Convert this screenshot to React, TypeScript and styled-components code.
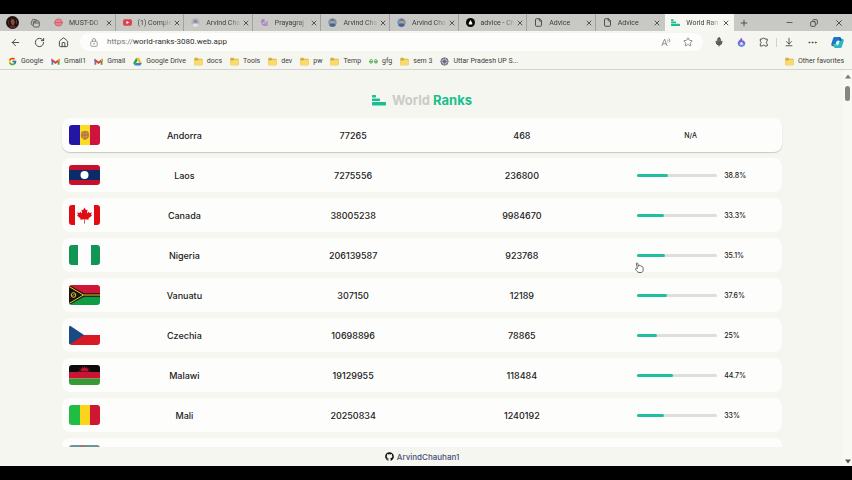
import React from "react";
import styled, { createGlobalStyle } from "styled-components";
import {
  ArrowLeft,
  ArrowDownToLine,
  Copy,
  Ellipsis,
  File,
  House,
  Mic,
  Minus,
  Plus,
  RotateCw,
  Star,
  X,
} from "lucide-react";
import { FcGoogle } from "react-icons/fc";
import { FaGithub } from "react-icons/fa";

const GlobalStyle = createGlobalStyle`
  * { box-sizing: border-box; }
  body { margin: 0; background: #000; }
  button { border: 0; padding: 0; background: none; color: inherit; font: inherit; }
  a { color: inherit; text-decoration: none; }
  svg { display: block; flex: none; }
`;

const Screen = styled.div`
  height: 100vh;
  padding: 14px 0;
  display: flex;
  flex-direction: column;
  background: #000;
  color: #3c3c3c;
  font: 7px/10px Roboto, sans-serif;
`;

const TabStrip = styled.div`
  flex: none;
  height: 17px;
  display: flex;
  background: #c8c8c4;
`;

const ProfileArea = styled.div`
  flex: none;
  width: 48px;
  padding-left: 6px;
  display: flex;
  align-items: center;
  gap: 11px;
`;

const Tab = styled.div<{ $active?: boolean; $divider?: boolean }>`
  flex: 1;
  min-width: 0;
  padding: 0 4px 0 6px;
  display: flex;
  align-items: center;
  background: ${(p) => (p.$active ? "#f7f7f2" : "transparent")};
  box-shadow: ${(p) => (p.$divider ? "inset -1px 0 #c8c8c4, inset -2px 0 #a2a2a2" : "none")};
`;

const TabTitle = styled.button`
  flex: 1;
  min-width: 0;
  display: flex;
  align-items: center;
  gap: 6px;
  text-align: left;
  white-space: nowrap;
  mask-image: linear-gradient(to right, #000 75%, transparent 98%);
`;

const WindowControls = styled.div`
  flex: none;
  width: 118px;
  padding: 0 8px 0 5px;
  display: flex;
  align-items: center;
  gap: 16px;
  & > :first-child { margin-right: auto; }
`;

const Toolbar = styled.div`
  flex: none;
  height: 22px;
  padding: 0 8px 0 10px;
  display: flex;
  align-items: center;
  gap: 13px;
  background: #f6f6f0;
`;

const AddressBar = styled.div`
  flex: 1;
  height: 18px;
  margin: 0 -2px 0 -2px;
  padding: 0 10px;
  display: flex;
  align-items: center;
  border-radius: 9px;
  background: #fdfdfb;
  font-size: 8px;
`;

const UrlScheme = styled.label`
  margin-left: 9px;
  color: #777;
`;

const UrlInput = styled.input`
  flex: 1;
  min-width: 0;
  padding: 0;
  border: 0;
  outline: 0;
  background: none;
  color: #2f2f2f;
  font: inherit;
`;

const AddressActions = styled.div`
  display: flex;
  align-items: center;
  gap: 12px;
  color: #777;
`;

const ToolbarDivider = styled.span`
  width: 1px;
  height: 9px;
  margin: 0 -6px;
  background: #d0d0d0;
`;

const BookmarkBar = styled.nav`
  flex: none;
  height: 17px;
  padding: 0 8px;
  display: flex;
  align-items: center;
  gap: 8px;
  border-bottom: 1px solid #d4d4d2;
  background: #f6f6f0;
`;

const Bookmark = styled.a<{ $last?: boolean }>`
  display: flex;
  align-items: center;
  gap: 4px;
  margin-left: ${(p) => (p.$last ? "auto" : "0")};
  white-space: nowrap;
`;

const Viewport = styled.div`
  flex: 1;
  min-height: 0;
  display: flex;
  background: #f6f6f0;
`;

const Page = styled.div`
  flex: 1;
  min-width: 0;
  padding: 0 61px 0 62px;
  display: flex;
  flex-direction: column;
  color: #222;
  font-family: Inter, sans-serif;
`;

const Brand = styled.h1`
  flex: none;
  height: 48px;
  margin: 0;
  padding-top: 11px;
  display: flex;
  align-items: center;
  justify-content: center;
  gap: 6px;
  color: #18bf8d;
  font-size: 13px;
  line-height: 16px;
  font-weight: 700;
`;

const BrandMuted = styled.span`
  color: #cbcbc7;
`;

const ListArea = styled.main`
  flex: 1;
  min-height: 0;
  margin: 0 -4px;
  padding: 0 4px;
  overflow: hidden;
`;

const CountryTable = styled.table`
  display: block;
  width: 100%;
`;

const CountryRows = styled.tbody`
  display: flex;
  flex-direction: column;
  gap: 6px;
`;

const CountryRow = styled.tr<{ $raised?: boolean }>`
  height: 34px;
  padding: 0 7px;
  display: grid;
  grid-template-columns: 31px repeat(4, 1fr);
  align-items: center;
  border-radius: 8px;
  background: #fdfdfb;
  box-shadow: ${(p) => (p.$raised ? "0 1px 1px #c9c9c7" : "none")};
`;

const Cell = styled.td`
  padding: 0;
  text-align: center;
  font-size: 9px;
  line-height: 13px;
  font-weight: 500;
`;

const RateCell = styled(Cell)`
  position: relative;
  display: flex;
  align-items: center;
  justify-content: center;
  gap: 7px;
  font-size: 7px;
`;

const Track = styled.div`
  width: 80px;
  height: 3px;
  border-radius: 2px;
  background: #dededa;
`;

const Fill = styled.div`
  height: 100%;
  border-radius: 2px;
  background: #1fbfa2;
`;

const RateValue = styled.span`
  width: 20px;
  text-align: left;
`;

const Pointer = styled.svg`
  position: absolute;
  left: 29px;
  top: 13px;
`;

const FlagFrame = styled.svg`
  width: 31px;
  height: 20px;
  border-radius: 3px;
`;

const Footer = styled.footer`
  flex: none;
  height: 19px;
  display: flex;
  align-items: center;
  justify-content: center;
  color: #484d7c;
  font-size: 8px;
  font-weight: 500;
`;

const AuthorLink = styled.a`
  display: flex;
  align-items: center;
  gap: 3px;
`;

const ScrollRail = styled.div`
  flex: none;
  width: 9px;
  padding: 4px 0 2px;
  display: flex;
  flex-direction: column;
  align-items: center;
  background: #f9f9f4;
`;

const ScrollThumb = styled.div`
  width: 5px;
  height: 15px;
  margin: 7px 0 auto;
  border-radius: 3px;
  background: #858585;
`;

function BarsIcon({ size }: { size: number }) {
  return (
    <svg width={size} height={size} viewBox="0 0 14 14" fill="#18bf8d">
      <rect x="0" y="2" width="4" height="2.5" rx=".6" />
      <rect x="0" y="5.5" width="8" height="2.5" rx=".6" />
      <rect x="0" y="9" width="14" height="3.5" rx=".8" />
    </svg>
  );
}

function Avatar() {
  return (
    <svg width="13" height="13" viewBox="0 0 13 13">
      <circle cx="6.5" cy="6.5" r="6.5" fill="#21130f" />
      <path d="M5 3.5c2-1.6 4 .2 3.7 2.7S7.500 9.500 6.600 9.200 4 6 5 3.500z" fill="#8b4a38" />
      <path d="M3 11c1-2.500 6-2.500 7 0-2 2-5 2-7 0z" fill="#54272a" />
      <path d="M2 4l1 5M10.500 4v4" stroke="#71402f" strokeWidth=".7" />
    </svg>
  );
}

function TabsIcon() {
  return (
    <svg width="10" height="10" viewBox="0 0 10 10" fill="none" stroke="#555" strokeWidth=".9">
      <rect x="3.300" y="3" width="6" height="6" rx="1.200" />
      <path d="M3 7.500l-1.400-.9a1 1 0 0 1-.4-1.200L2.300 2a1 1 0 0 1 1.200-.7L7 2.200V3M3.300 5H9M5 3v2" />
    </svg>
  );
}

type TabIconKind = "red" | "youtube" | "person" | "purple" | "color" | "advice" | "file" | "bars";

function TabIcon({ kind }: { kind: TabIconKind }) {
  if (kind === "bars") return <BarsIcon size={9} />;
  if (kind === "file") return <File size={9} color="#444" strokeWidth={2.5} />;
  return (
    <svg width="9" height="9" viewBox="0 0 9 9">
      {kind === "red" && (
        <>
          <circle cx="4.5" cy="4.5" r="3.7" fill="#e7a8a8" stroke="#d66a72" strokeWidth="1" />
          <path d="M.3 3.700h8.400v1.700H.3z" fill="#d85c66" />
          <path d="M2.500 2.300h4M2.500 6.800h4" stroke="#c65560" strokeWidth=".7" />
        </>
      )}
      {kind === "youtube" && (
        <>
          <rect y="1.300" width="9" height="6.400" rx="1.700" fill="#dc4350" />
          <path d="M3.500 3l2.700 1.500L3.500 6z" fill="#fff" />
        </>
      )}
      {kind === "person" && (
        <>
          <circle cx="4.5" cy="4.5" r="4.200" fill="#b3b6c2" />
          <circle cx="4.5" cy="3.400" r="2" fill="#8f8d98" />
          <path d="M1.300 7.200c1-2.300 5.400-2.300 6.400 0-1.700 2-4.700 2-6.400 0z" fill="#e2e2e6" />
        </>
      )}
      {kind === "color" && (
        <>
          <circle cx="4.5" cy="4.5" r="4.200" fill="#6a97c4" />
          <circle cx="4.5" cy="3.800" r="2" fill="#d19a6c" />
          <path d="M1.300 7.200c1-2.300 5.400-2.300 6.400 0-1.700 2-4.700 2-6.400 0z" fill="#45639a" />
          <path d="M2.500 2.900c.5-2 3.500-2 4 0-1.200-.6-2.800-.6-4 0z" fill="#5a4038" />
        </>
      )}
      {kind === "purple" && (
        <>
          <circle cx="3" cy="2.800" r="1.900" fill="#a887bf" />
          <path d="M4 5l4-2.500v5H4z" fill="#bd95c8" />
          <path d="M.8 3.500l3 4M2 6.500l5 1" stroke="#9d75b6" strokeWidth=".8" />
        </>
      )}
      {kind === "advice" && (
        <>
          <circle cx="4.5" cy="4.5" r="4.500" fill="#080808" />
          <path d="M4.500 2l1.700 3v1.500H2.800V5z" fill="#fff" />
        </>
      )}
    </svg>
  );
}

function LockIcon() {
  return (
    <svg width="8" height="9" viewBox="0 0 8 9" fill="none" stroke="#888" strokeWidth=".8">
      <rect x=".8" y="3.300" width="6.400" height="5" rx=".8" />
      <path d="M2.500 3.300V2a1.500 1.500 0 0 1 3 0v1.300" />
      <circle cx="4" cy="5.800" r=".4" fill="#888" />
    </svg>
  );
}

function ReadAloudIcon() {
  return (
    <svg width="10" height="9" viewBox="0 0 10 9" fill="none" stroke="#777" strokeWidth=".8">
      <path d="M.8 8L3.500 1.200 6.200 8M1.700 5.800h3.600M6.300 1.500c.7.500.7 1.500 0 2M7.700.5c1.400 1 1.400 3 0 4" />
    </svg>
  );
}

function FlameIcon() {
  return (
    <svg width="9" height="10" viewBox="0 0 9 10">
      <path d="M4 .5c.2 2-3.300 3.300-3.300 6C.7 8.500 2.500 9.700 4.500 9.700S8.300 8.300 8.300 6.300C8.300 4.800 7 4.300 6.500 3.300 5.700 4 5.300 4 5.300 4 5.600 2.500 5 1.200 4 .5z" fill="#7d5bd4" />
      <path d="M1.500 5.200C1 8 2.800 9.500 4.500 9.500c2 0 3.500-1.200 3.600-3z" fill="#5b94e1" />
      <circle cx="4.500" cy="6.500" r="1.500" fill="#e2d7ff" />
    </svg>
  );
}

function PuzzleIcon() {
  return (
    <svg width="10" height="10" viewBox="0 0 10 10" fill="none" stroke="#444" strokeWidth=".9" strokeLinejoin="round">
      <path d="M1.300 2h2a1.300 1.300 0 0 1 2.500 0h2.400v2.300a1.300 1.300 0 0 0 0 2.500V9H5.800a1.300 1.300 0 0 0-2.500 0h-2V6.700a1.300 1.300 0 0 0 0-2.400z" />
    </svg>
  );
}

function CopilotIcon() {
  return (
    <svg width="13" height="13" viewBox="0 0 14 14">
      <path d="M4 1h5c1 0 1.500.7 1.800 1.700L11.500 5H7.500L5 10 3.500 11H2C.5 11 0 9.700.4 8.300L2.200 2.600C2.500 1.600 3 1 4 1z" fill="#1976c9" />
      <path d="M10 13H5c-1 0-1.500-.7-1.800-1.700L2.500 9h4L9 4l1.500-1H12c1.500 0 2 1.300 1.600 2.700l-1.800 5.700c-.3 1-.8 1.600-1.800 1.600z" fill="#29b6c8" />
      <path d="M7 5h2.500L8 9.200c-.2.600-.5.800-1 .8H4.500L6 5.700c.2-.5.500-.7 1-.7z" fill="#e8f8fa" />
      <path d="M2.500 9h4l-.8 1.500c-.3.500-.8.500-1.300.5H3.100z" fill="#53c46c" />
      <path d="M9 1c1 0 1.500.7 1.800 1.700l.7 2.300H9z" fill="#1557ae" />
    </svg>
  );
}

type BookmarkKind = "google" | "gmail" | "drive" | "folder" | "gfg" | "seal";

function BookmarkIcon({ kind }: { kind: BookmarkKind }) {
  if (kind === "google") return <FcGoogle size={9} />;
  return (
    <svg width="9" height="9" viewBox="0 0 9 9">
      {kind === "gmail" && (
        <>
          <path d="M.5 2v5.700h1.800V3.500z" fill="#4285e8" />
          <path d="M8.500 2v5.700H6.700V3.500z" fill="#36a653" />
          <path d="M.5 1.500l4 3 4-3v2.500l-4 3-4-3z" fill="#dc4437" />
          <path d="M7 2.600l1.500-1.100v2L7 4.600z" fill="#efb91d" />
        </>
      )}
      {kind === "drive" && (
        <>
          <path d="M3.200.8L.2 6l1.500 2.500L4.700 3.300z" fill="#29a35a" />
          <path d="M3.200.8h2.700L8.800 6H6z" fill="#f6bd1b" />
          <path d="M3.200 6h5.600L7.300 8.500H1.700z" fill="#397edc" />
        </>
      )}
      {kind === "folder" && (
        <>
          <path d="M.3 1.600c0-.5.300-.8.800-.8h2l1 1h3.800c.5 0 .8.300.8.800v4.800c0 .5-.3.800-.8.800H1.100c-.5 0-.8-.3-.8-.8z" fill="#d9aa35" />
          <path d="M.3 3.500h3l1-1h3.600c.5 0 .8.300.8.800v4.200c0 .5-.3.800-.8.800H1.100c-.5 0-.8-.3-.8-.8z" fill="#f8da6d" />
        </>
      )}
      {kind === "gfg" && (
        <path d="M3.700 3.300C2.200 2 .6 3 .6 4.500S2.700 7 3.800 4.700H.6M5.300 3.300C6.800 2 8.400 3 8.400 4.500S6.300 7 5.200 4.700h3.200" fill="none" stroke="#43a047" strokeWidth="1" />
      )}
      {kind === "seal" && (
        <>
          <circle cx="4.500" cy="4.500" r="3.700" fill="#bbb8c6" stroke="#625d73" strokeWidth=".8" />
          <path d="M4.500 1v7M1 4.500h7M2 2l5 5M7 2L2 7" stroke="#625d73" strokeWidth=".5" />
          <circle cx="4.500" cy="4.500" r="1.200" fill="#625d73" />
        </>
      )}
    </svg>
  );
}

const flags: Record<string, React.ReactNode> = {
  Andorra: (
    <>
      <path d="M0 0h11v20H0z" fill="#2416a5" />
      <path d="M11 0h10v20H11z" fill="#f9dd25" />
      <path d="M21 0h10v20H21z" fill="#cf123e" />
      <circle cx="16" cy="10" r="4.300" fill="#d49a48" />
      <path d="M13 7h6v5c-1 3-5 3-6 0zM16 7v7M13 10h6" fill="none" stroke="#a6693c" strokeWidth=".9" />
    </>
  ),
  Laos: (
    <>
      <path d="M0 0h31v20H0z" fill="#c8102e" />
      <path d="M0 5h31v10H0z" fill="#0b2c68" />
      <circle cx="15.500" cy="10" r="4" fill="#fff" />
    </>
  ),
  Canada: (
    <>
      <path d="M0 0h31v20H0z" fill="#fdfdfd" />
      <path d="M0 0h6v20H0zM25 0h6v20h-6z" fill="#e00c14" />
      <path d="M15.500 2.500l1.500 2.700 1.500-.7-.6 4 2-1.800.5 1.300 2.400-.4-.8 2.200 1 .6-3.600 3.100.3 1.200-3.900-.5.100 4.300h-.8l.1-4.300-3.900.5.300-1.200L8 10.400l1-.6-.8-2.200 2.400.4.500-1.300 2 1.800-.6-4 1.500.7z" fill="#e00c14" />
    </>
  ),
  Nigeria: (
    <>
      <path d="M0 0h31v20H0z" fill="#fdfdfd" />
      <path d="M0 0h9v20H0zM22 0h9v20h-9z" fill="#109554" />
    </>
  ),
  Vanuatu: (
    <>
      <path d="M0 0h31v10H0z" fill="#d01636" />
      <path d="M0 10h31v10H0z" fill="#109c43" />
      <path d="M0 0l15 8.300h16v3.400H15L0 20z" fill="#151510" />
      <path d="M0 1.500L14.500 10 0 18.500M14.500 10H31" fill="none" stroke="#efc52e" strokeWidth="1" />
      <circle cx="4.500" cy="10" r="2.300" fill="none" stroke="#efc52e" strokeWidth="1" />
      <path d="M3.500 11l2-2" stroke="#efc52e" strokeWidth=".8" />
    </>
  ),
  Czechia: (
    <>
      <path d="M0 0h31v10H0z" fill="#fdfdfd" />
      <path d="M0 10h31v10H0z" fill="#d81a25" />
      <path d="M0 0l15 10L0 20z" fill="#194a83" />
    </>
  ),
  Malawi: (
    <>
      <path d="M0 0h31v7H0z" fill="#0c0c0c" />
      <path d="M0 7h31v6.500H0z" fill="#cb1433" />
      <path d="M0 13.500h31V20H0z" fill="#369b35" />
      <path d="M11.500 6.500a4 4 0 0 1 8 0z" fill="#b91331" />
      <path d="M9.500 6l1.500.3M10.500 3.500l1.500 1M13 1.800l.7 1.500M15.500 1v1.500M18 1.800l-.7 1.500M20.500 3.500l-1.500 1M21.500 6l-1.500.3" stroke="#b91331" strokeWidth=".7" />
    </>
  ),
  Mali: (
    <>
      <path d="M0 0h11v20H0z" fill="#20bc43" />
      <path d="M11 0h10v20H11z" fill="#fbd51c" />
      <path d="M21 0h10v20H21z" fill="#cf1733" />
    </>
  ),
  Paraguay: (
    <>
      <path d="M0 0h31v7H0z" fill="#6f9199" />
      <path d="M12 0h3v7h-3z" fill="#bd6a65" />
      <path d="M0 7h31v13H0z" fill="#fff" />
    </>
  ),
};

function Flag({ country }: { country: string }) {
  return (
    <FlagFrame viewBox="0 0 31 20" role="img" aria-label={`Flag of ${country}`}>
      {flags[country]}
    </FlagFrame>
  );
}

const tabs: { title: string; icon: TabIconKind }[] = [
  { title: "MUST-DO", icon: "red" },
  { title: "(1) Comple", icon: "youtube" },
  { title: "Arvind Cha", icon: "person" },
  { title: "Prayagraj", icon: "purple" },
  { title: "Arvind Cha", icon: "color" },
  { title: "Arvind Cha", icon: "color" },
  { title: "advice - Ch", icon: "advice" },
  { title: "Advice", icon: "file" },
  { title: "Advice", icon: "file" },
  { title: "World Ran", icon: "bars" },
];

const bookmarks: { label: string; icon: BookmarkKind }[] = [
  { label: "Google", icon: "google" },
  { label: "Gmail1", icon: "gmail" },
  { label: "Gmail", icon: "gmail" },
  { label: "Google Drive", icon: "drive" },
  { label: "docs", icon: "folder" },
  { label: "Tools", icon: "folder" },
  { label: "dev", icon: "folder" },
  { label: "pw", icon: "folder" },
  { label: "Temp", icon: "folder" },
  { label: "gfg", icon: "gfg" },
  { label: "sem 3", icon: "folder" },
  { label: "Uttar Pradesh UP S...", icon: "seal" },
  { label: "Other favorites", icon: "folder" },
];

const countries: { name: string; population: number; area: number; rate?: number; pointed?: boolean }[] = [
  { name: "Andorra", population: 77265, area: 468 },
  { name: "Laos", population: 7275556, area: 236800, rate: 38.8 },
  { name: "Canada", population: 38005238, area: 9984670, rate: 33.3 },
  { name: "Nigeria", population: 206139587, area: 923768, rate: 35.1, pointed: true },
  { name: "Vanuatu", population: 307150, area: 12189, rate: 37.6 },
  { name: "Czechia", population: 10698896, area: 78865, rate: 25 },
  { name: "Malawi", population: 19129955, area: 118484, rate: 44.7 },
  { name: "Mali", population: 20250834, area: 1240192, rate: 33 },
];

export default function App() {
  return (
    <Screen>
      <GlobalStyle />
      <TabStrip>
        <ProfileArea>
          <Avatar />
          <TabsIcon />
        </ProfileArea>
        {tabs.map((tab, i) => (
          <Tab key={i} $active={i === tabs.length - 1} $divider={i < tabs.length - 2}>
            <TabTitle>
              <TabIcon kind={tab.icon} />
              {tab.title}
            </TabTitle>
            <button aria-label="Close tab">
              <X size={8} strokeWidth={2.5} />
            </button>
          </Tab>
        ))}
        <WindowControls>
          <button aria-label="New tab"><Plus size={10} /></button>
          <button aria-label="Minimize"><Minus size={9} /></button>
          <button aria-label="Restore"><Copy size={8} strokeWidth={2.5} transform="scale(-1 1)" /></button>
          <button aria-label="Close window"><X size={10} /></button>
        </WindowControls>
      </TabStrip>

      <Toolbar>
        <button aria-label="Back"><ArrowLeft size={11} /></button>
        <button aria-label="Reload"><RotateCw size={11} /></button>
        <button aria-label="Home"><House size={11} /></button>
        <AddressBar>
          <LockIcon />
          <UrlScheme htmlFor="url">https://</UrlScheme>
          <UrlInput id="url" defaultValue="world-ranks-3080.web.app" />
          <AddressActions>
            <button aria-label="Read aloud"><ReadAloudIcon /></button>
            <button aria-label="Add to favorites"><Star size={10} /></button>
          </AddressActions>
        </AddressBar>
        <button aria-label="Voice"><Mic size={10} fill="#777" /></button>
        <button aria-label="Flame extension"><FlameIcon /></button>
        <button aria-label="Extensions"><PuzzleIcon /></button>
        <ToolbarDivider />
        <button aria-label="Downloads"><ArrowDownToLine size={10} /></button>
        <button aria-label="More"><Ellipsis size={11} /></button>
        <button aria-label="Copilot"><CopilotIcon /></button>
      </Toolbar>

      <BookmarkBar>
        {bookmarks.map((item, i) => (
          <Bookmark key={item.label} href="#" $last={i === bookmarks.length - 1}>
            <BookmarkIcon kind={item.icon} />
            {item.label}
          </Bookmark>
        ))}
      </BookmarkBar>

      <Viewport>
        <Page>
          <Brand>
            <BarsIcon size={14} />
            <span>
              <BrandMuted>World</BrandMuted> Ranks
            </span>
          </Brand>
          <ListArea>
            <CountryTable>
              <CountryRows>
                {countries.map((c, i) => (
                  <CountryRow key={c.name} $raised={i === 0}>
                    <Cell><Flag country={c.name} /></Cell>
                    <Cell>{c.name}</Cell>
                    <Cell>{c.population}</Cell>
                    <Cell>{c.area}</Cell>
                    <RateCell>
                      {c.rate === undefined ? (
                        "N/A"
                      ) : (
                        <>
                          <Track role="progressbar" aria-label={`${c.name} rate`} aria-valuenow={c.rate}>
                            <Fill style={{ width: `${c.rate}%` }} />
                          </Track>
                          <RateValue>{c.rate}%</RateValue>
                        </>
                      )}
                      {c.pointed && (
                        <Pointer width="9" height="11" viewBox="0 0 9 11" fill="#fff" stroke="#444" strokeWidth=".8">
                          <path d="M2.500 6.500L1.300 1.800c-.2-1 1-1.300 1.300-.4l1 3 .2-.9c.8-.5 1.300 0 1.400.4.700-.4 1.200 0 1.300.5.800-.3 1.300.2 1.400.9l.3 2.200c.1 1.500-.7 3-2 3H4C2.500 10.500 1.300 8.500.6 7.300c-.4-.8.6-1.300 1.900-.8z" />
                        </Pointer>
                      )}
                    </RateCell>
                  </CountryRow>
                ))}
                <CountryRow>
                  <Cell><Flag country="Paraguay" /></Cell>
                </CountryRow>
              </CountryRows>
            </CountryTable>
          </ListArea>
          <Footer>
            <AuthorLink href="#">
              <FaGithub size={9} color="#111" />
              ArvindChauhan1
            </AuthorLink>
          </Footer>
        </Page>
        <ScrollRail>
          <svg width="6" height="5" viewBox="0 0 6 5" fill="#777"><path d="M3 .5L6 4.500H0z" /></svg>
          <ScrollThumb />
          <svg width="6" height="5" viewBox="0 0 6 5" fill="#555"><path d="M0 .5h6L3 4.500z" /></svg>
        </ScrollRail>
      </Viewport>
    </Screen>
  );
}
